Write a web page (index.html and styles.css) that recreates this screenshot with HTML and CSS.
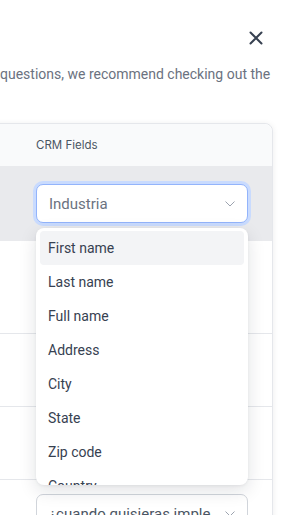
FILE: index.html
```html
<!DOCTYPE html>
<html lang="en">
<head>
  <meta charset="UTF-8">
  <title>Map CRM Fields</title>
  <link rel="stylesheet" href="styles.css">
</head>
<body>
  <div class="modal">
    <div class="modal-top">
      <button class="close" aria-label="Close">
        <svg width="14" height="14" viewBox="0 0 14 14"><path d="M1.5 1.5 L12.5 12.5 M12.5 1.5 L1.5 12.5" stroke="#374151" stroke-width="2" stroke-linecap="round"/></svg>
      </button>
    </div>
    <p class="intro">questions, we recommend checking out the</p>

    <div class="card">
      <div class="card-head">
        <div class="col-left"></div>
        <div class="col-right">CRM Fields</div>
      </div>

      <div class="row active">
        <div class="col-left"></div>
        <div class="col-right">
          <div class="select focus">
            <span>Industria</span>
            <svg class="chev" width="10" height="6" viewBox="0 0 10 6"><path d="M0.5 0.5 L5 5 L9.5 0.5" fill="none" stroke="#9ca3af" stroke-width="1"/></svg>
          </div>
          <ul class="menu">
            <li class="hl">First name</li>
            <li>Last name</li>
            <li>Full name</li>
            <li>Address</li>
            <li>City</li>
            <li>State</li>
            <li>Zip code</li>
            <li>Country</li>
          </ul>
        </div>
      </div>

      <div class="row tall"><div class="col-left"></div><div class="col-right"></div></div>
      <div class="row"><div class="col-left"></div><div class="col-right"></div></div>
      <div class="row"><div class="col-left"></div><div class="col-right"></div></div>

      <div class="row last">
        <div class="col-left"></div>
        <div class="col-right">
          <div class="select">
            <span class="clip">¿cuando quisieras implementarlo?</span>
            <svg class="chev" width="10" height="6" viewBox="0 0 10 6"><path d="M0.5 0.5 L5 5 L9.5 0.5" fill="none" stroke="#9ca3af" stroke-width="1"/></svg>
          </div>
        </div>
      </div>
    </div>
  </div>
</body>
</html>
```

FILE: styles.css
```css
html, body {
  margin: 0;
  padding: 0;
  background: #fff;
}
body {
  width: 293px;
  height: 515px;
  overflow: hidden;
  font-family: Roboto, "Noto Sans", sans-serif;
}
.modal-top {
  display: flex;
  justify-content: flex-end;
  padding: 31px 30px 0 0;
}
.close {
  background: none;
  border: 0;
  padding: 0;
  width: 14px;
  height: 14px;
  display: flex;
  cursor: pointer;
}
.intro {
  margin: 20px 0 0 0;
  font-size: 14px;
  line-height: 18px;
  color: #6b7280;
  white-space: nowrap;
}
.card {
  margin: 40px 0 0 -20px;
  width: 291px;
  border: 1px solid #e5e7eb;
  border-radius: 8px;
  box-shadow: 0 1px 6px rgba(17, 24, 39, 0.08);
  background: #fff;
}
.card-head {
  display: flex;
  align-items: center;
  height: 42px;
  background: #f9fafb;
  border-radius: 8px 8px 0 0;
  font-family: Inter, Roboto, sans-serif;
  font-size: 11.5px;
  color: #4b5563;
}
.col-left {
  width: 55px;
  flex: none;
}
.col-right {
  width: 212px;
  position: relative;
}
.row {
  display: flex;
  height: 73px;
  border-top: 1px solid #e5e7eb;
  box-sizing: border-box;
}
.row.active {
  height: 75px;
  border-top: 0;
  background: #e9eaed;
  padding-top: 18px;
}
.row.tall {
  height: 92px;
  border-top: 0;
}
.row.last {
  padding-top: 14px;
}
.select {
  height: 39px;
  box-sizing: border-box;
  border: 1px solid #d1d5db;
  border-radius: 7px;
  background: #fff;
  display: flex;
  align-items: center;
  justify-content: space-between;
  padding: 0 12px;
  font-size: 15px;
  color: #4b5563;
  overflow: hidden;
  white-space: nowrap;
}
.select span {
  overflow: hidden;
}
.select .clip {
  max-width: 162px;
}
.select.focus {
  border-color: #93b4fb;
  box-shadow: 0 0 0 3px #c9dbfe;
  color: #6b7280;
}
.chev {
  flex: none;
  margin-left: 8px;
}
.menu {
  position: absolute;
  top: 44px;
  left: 0;
  width: 212px;
  height: 257px;
  margin: 0;
  padding: 3px 4px 4px;
  box-sizing: border-box;
  list-style: none;
  background: #fff;
  border-radius: 8px;
  box-shadow: 0 6px 18px rgba(17, 24, 39, 0.12), 0 1px 3px rgba(17, 24, 39, 0.06);
  overflow: hidden;
  z-index: 2;
}
.menu li {
  height: 34px;
  line-height: 34px;
  padding-left: 8px;
  font-size: 14px;
  color: #374151;
  border-radius: 4px;
}
.menu li.hl {
  background: #f3f4f6;
}
```
